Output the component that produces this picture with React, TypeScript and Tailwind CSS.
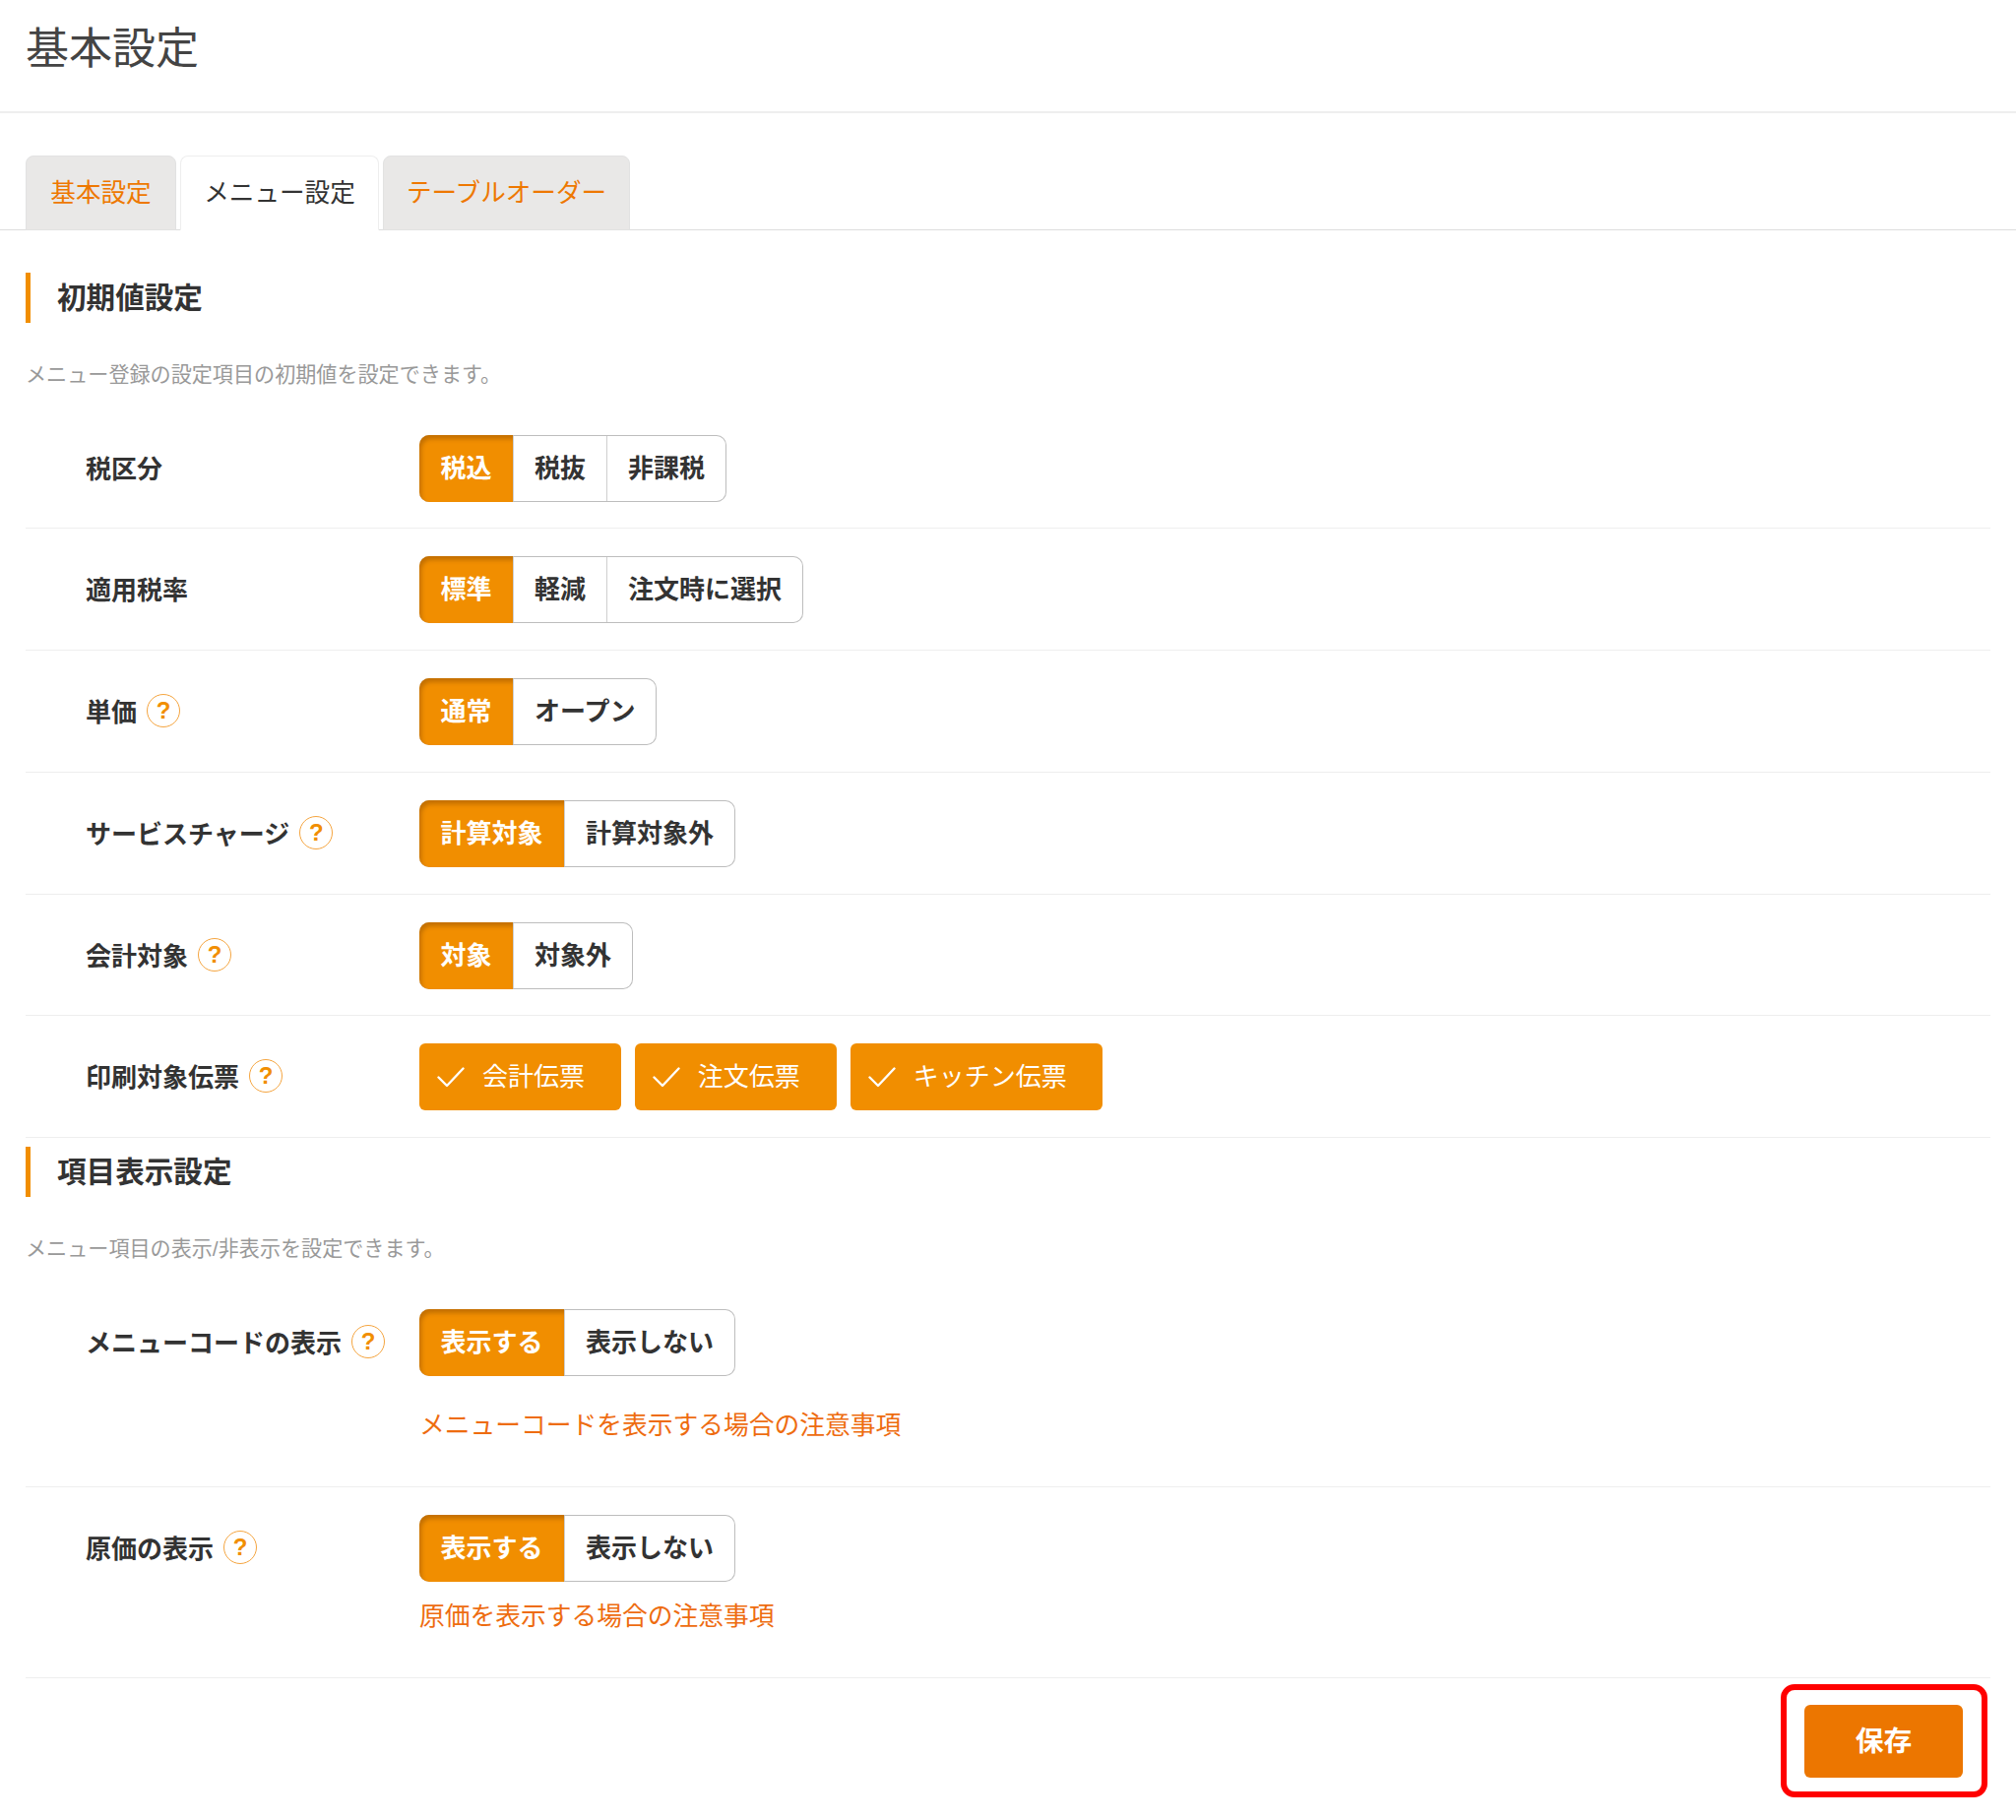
import React from 'react';

const Help = () => (
  <span className="ml-[10px] -mt-[2px] flex h-[34px] w-[34px] shrink-0 items-center justify-center rounded-full border border-[#f5a540] text-[24px] leading-none font-bold text-[#f18e00]">
    ?
  </span>
);

const Check = () => (
  <svg width="28" height="21" viewBox="0 0 28 21" fill="none" className="shrink-0">
    <path d="M1.5 10.5 L10 19 L26.5 1.5" stroke="#fff" strokeWidth="2.4" strokeLinecap="round" strokeLinejoin="round" />
  </svg>
);

const Segmented = ({ items }: { items: string[] }) => (
  <div className="flex h-[68px] w-fit rounded-[10px] border border-l-0 border-[#bdbdbd] font-bold">
    {items.map((item, i) => (
      <div
        key={item}
        className={
          i === 0
            ? '-my-px flex items-center rounded-l-[10px] bg-[#f18e00] px-[21.5px] text-white shadow-[inset_2px_4px_4px_rgba(140,75,0,0.45)]'
            : 'flex items-center border-l border-[#cfcfcf] px-[21px]'
        }
      >
        {item}
      </div>
    ))}
  </div>
);

const Row = ({
  label,
  help,
  items,
  children,
  last,
}: {
  label: string;
  help?: boolean;
  items?: string[];
  children?: React.ReactNode;
  last?: boolean;
}) => (
  <div className={`flex border-b border-[#eeeeee] pl-[61px] pt-[28px] ${last ? 'pb-0' : 'pb-[26.8px]'}`}>
    <div className="flex h-[68px] w-[339px] shrink-0 items-center font-bold">
      <span className="pt-[2px]">{label}</span>
      {help && <Help />}
    </div>
    <div>
      {items ? <Segmented items={items} /> : children}
    </div>
  </div>
);

const SectionTitle = ({ title, desc }: { title: string; desc: string }) => (
  <>
    <h2 className="flex h-[51px] items-center border-l-[5px] border-[#f18e00] pl-[27px] text-[29.6px] leading-none font-bold">
      {title}
    </h2>
    <p className="mt-[39px] h-[28px] text-[21.1px] leading-[28px] text-[#999999]">{desc}</p>
  </>
);

const tabClass =
  'flex h-[76px] items-center justify-center rounded-t-[8px] border pt-[2px] text-[25.6px] -mb-px';

export default function App() {
  return (
    <div className="min-h-[1849px] bg-white font-['Liberation_Sans','Noto_Sans_CJK_JP',sans-serif] text-[26px] leading-none text-[#333333]">
      <header className="flex h-[115px] items-start border-b-2 border-[#eeeeee] pl-[26px] pt-[25px]">
        <h1 className="text-[44px] leading-[50px] font-normal text-[#444444]">基本設定</h1>
      </header>

      <nav className="mt-[43px] flex gap-[4px] border-b border-[#dddddd] pl-[26px]">
        <div className={`${tabClass} w-[153px] border-[#e2e2e2] bg-[#e9e8e7] text-[#ee7800]`}>基本設定</div>
        <div className={`${tabClass} w-[202px] border-[#eeeeee] border-b-white bg-white`}>メニュー設定</div>
        <div className={`${tabClass} w-[251px] border-[#e2e2e2] bg-[#e9e8e7] text-[#ee7800]`}>テーブルオーダー</div>
      </nav>

      <main className="mx-[26px]">
        <div className="pt-[43px]">
          <SectionTitle title="初期値設定" desc="メニュー登録の設定項目の初期値を設定できます。" />
        </div>
        <div className="mt-[18.5px]">
          <Row label="税区分" items={['税込', '税抜', '非課税']} />
          <Row label="適用税率" items={['標準', '軽減', '注文時に選択']} />
          <Row label="単価" help items={['通常', 'オープン']} />
          <Row label="サービスチャージ" help items={['計算対象', '計算対象外']} />
          <Row label="会計対象" help items={['対象', '対象外']} />
          <Row label="印刷対象伝票" help>
            <div className="flex gap-[14px]">
              {['会計伝票', '注文伝票', 'キッチン伝票'].map((t) => (
                <div
                  key={t}
                  className="flex h-[68px] items-center rounded-[6px] bg-[#f18e00] pl-[18px] pr-[36.8px] text-white"
                >
                  <Check />
                  <span className="ml-[18px]">{t}</span>
                </div>
              ))}
            </div>
          </Row>
        </div>

        <div className="pt-[9px]">
          <SectionTitle title="項目表示設定" desc="メニュー項目の表示/非表示を設定できます。" />
        </div>
        <div className="mt-[19px]">
          <Row label="メニューコードの表示" help last>
            <Segmented items={['表示する', '表示しない']} />
            <p className="mt-[36px] pb-[48px] text-[25.75px] leading-[28px] text-[#ee6c10]">
              メニューコードを表示する場合の注意事項
            </p>
          </Row>
          <Row label="原価の表示" help last>
            <Segmented items={['表示する', '表示しない']} />
            <p className="mt-[21px] pb-[48px] text-[25.75px] leading-[28px] text-[#ee6c10]">原価を表示する場合の注意事項</p>
          </Row>
        </div>

        <div className="mt-[27px] flex justify-end pr-[28px]">
          <div className="relative">
            <button className="flex h-[74px] w-[161px] items-center justify-center rounded-[6px] bg-[#ec7600] text-[28.8px] font-bold text-white">
              保存
            </button>
            <div className="absolute -top-[21px] -right-[25px] -bottom-[20px] -left-[24px] rounded-[14px] border-[6px] border-[#ff0000]" />
          </div>
        </div>
      </main>
    </div>
  );
}
